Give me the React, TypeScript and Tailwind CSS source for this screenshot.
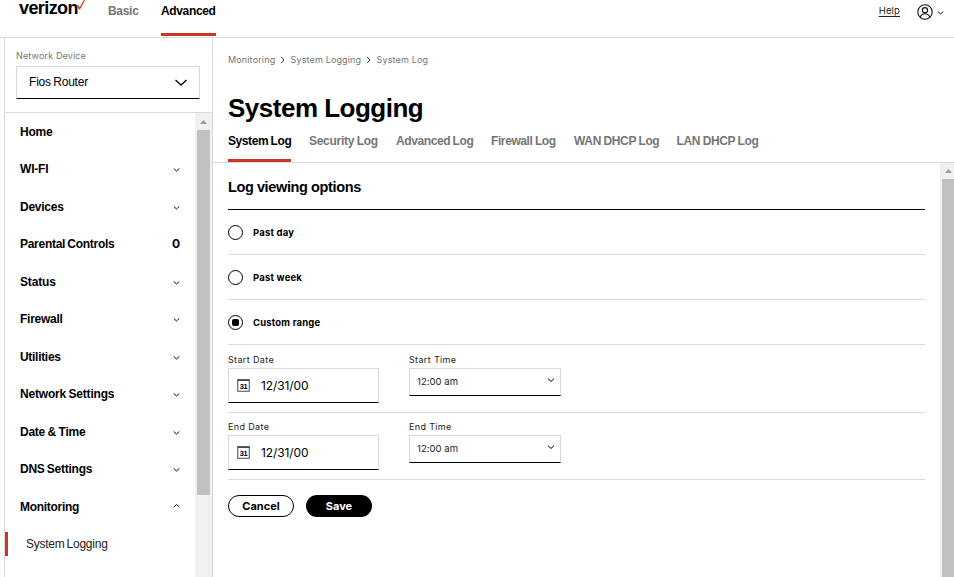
import React from "react";

type ChevronProps = { up?: boolean; className?: string; weight?: number };

function Chevron({ up = false, className = "", weight = 1 }: ChevronProps) {
  return (
    <svg viewBox="0 0 12 7" fill="none" stroke="currentColor" strokeWidth={weight} className={className}>
      <path d={up ? "M0.5 6 6 1l5.5 5" : "M0.5 1 6 6l5.5-5"} vectorEffect="non-scaling-stroke" />
    </svg>
  );
}

const navItems = [
  { label: "Home", icon: "none", track: "tracking-[-0.2px]" },
  { label: "WI-FI", icon: "down", track: "tracking-[-0.2px]" },
  { label: "Devices", icon: "down", track: "tracking-[-0.25px]" },
  { label: "Parental Controls", icon: "count", track: "tracking-[-0.28px] [word-spacing:-0.8px]" },
  { label: "Status", icon: "down", track: "tracking-[-0.15px]" },
  { label: "Firewall", icon: "down", track: "tracking-[-0.25px]" },
  { label: "Utilities", icon: "down", track: "tracking-[-0.3px]" },
  { label: "Network Settings", icon: "down", track: "tracking-[-0.18px] [word-spacing:-0.8px]" },
  { label: "Date & Time", icon: "down", track: "tracking-[-0.25px] [word-spacing:-0.5px]" },
  { label: "DNS Settings", icon: "down", track: "tracking-[-0.25px] [word-spacing:-0.8px]" },
  { label: "Monitoring", icon: "up", track: "tracking-[-0.3px]" },
];

const tabs = [
  { label: "System Log", box: "w-[63px] mr-[18px] tracking-[-0.42px]" },
  { label: "Security Log", box: "w-[69px] mr-[18px] tracking-[-0.28px]" },
  { label: "Advanced Log", box: "w-[77px] mr-[18px] tracking-[-0.4px]" },
  { label: "Firewall Log", box: "w-[65px] mr-[18px] tracking-[-0.4px]" },
  { label: "WAN DHCP Log", box: "w-[85px] mr-[17.5px] tracking-[-0.34px]" },
  { label: "LAN DHCP Log", box: "w-[82px] tracking-[-0.34px]" },
];

function Header() {
  return (
    <header className="flex h-[38px] shrink-0 border-b border-[#d8dada] pl-[19px] pr-[11px]">
      <div className="flex w-[89px] items-start">
        <span className="text-[18px] leading-4 font-bold tracking-[-0.6px]">verizon</span>
        <svg viewBox="0 0 8 11" className="-ml-px h-[11px] w-2 shrink-0" fill="#d52b1e">
          <path d="M0 5.2h1.5l1 2.3L6.8 0H8L3 9.4H2z" />
        </svg>
      </div>
      <span className="w-[53px] pt-1 text-[12px] leading-[14px] font-bold tracking-[-0.3px] text-[#747676]">Basic</span>
      <div className="h-9 w-[55px] border-b-[3px] border-[#cd3627] pt-1 text-[12px] leading-[14px] font-bold tracking-[-0.35px] whitespace-nowrap">
        Advanced
      </div>
      <div className="ml-auto flex h-6 items-center">
        <a className="mr-[17px] -mt-0.5 font-['Inter',sans-serif] text-[9.5px] tracking-[0.15px] text-[#222] underline underline-offset-2">Help</a>
        <svg viewBox="0 0 16 16" className="mr-1 size-4" fill="none" stroke="#111" strokeWidth="1.1">
          <circle cx="8" cy="8" r="7.2" />
          <circle cx="8" cy="6.2" r="2.6" />
          <path d="M3.2 13.2c.8-2.4 2.5-3.5 4.8-3.5s4 1.1 4.8 3.5" />
        </svg>
        <Chevron className="mt-0.5 -mr-px h-[3.5px] w-[7px] overflow-visible" />
      </div>
    </header>
  );
}

function Sidebar() {
  return (
    <aside className="ml-1 flex w-[209px] shrink-0 flex-col border-x border-[#d8dada]">
      <div className="h-[75px] shrink-0 border-b border-[#d8dada] px-[11px] pt-[11px]">
        <div className="font-['Inter',sans-serif] text-[9px] leading-[13px] tracking-[0.15px] text-[#747676]">Network Device</div>
        <div className="mt-[4px] flex h-[33px] w-[184px] items-center justify-between border border-[#d8dada] border-b-black pr-3 pl-3">
          <span className="-mt-0.5 text-[12px] tracking-[-0.2px] [word-spacing:-0.8px]">Fios Router</span>
          <Chevron className="h-[7px] w-3 overflow-visible" weight={1.3} />
        </div>
      </div>
      <div className="flex min-h-0 flex-1">
        <nav className="flex w-[190px] flex-col">
          {navItems.map((item) => (
            <div key={item.label} className="flex h-[37.5px] shrink-0 items-center justify-between pr-[15px] pl-[15px] text-[12px] font-bold">
              <span className={item.track}>{item.label}</span>
              {item.icon === "count" && <span className="font-['Inter',sans-serif] text-[12px] font-bold">0</span>}
              {item.icon === "down" && <Chevron className="mt-px h-[3.5px] w-[7px] overflow-visible" />}
              {item.icon === "up" && <Chevron up className="-mt-0.5 h-[3.5px] w-[7px] overflow-visible" />}
            </div>
          ))}
          <div className="flex h-[37.5px] shrink-0 items-center">
            <span className="h-6 w-[3px] bg-[#cd3627]" />
            <span className="pl-[18px] text-[12px] tracking-[-0.25px] [word-spacing:-1px] text-[#222]">System Logging</span>
          </div>
        </nav>
        <div className="flex w-[17px] flex-col items-center bg-[#f0f0f0]">
          <svg viewBox="0 0 7 4" className="mt-[7px] mb-[6px] h-1 w-[7px] shrink-0" fill="#999">
            <path d="M0 4 3.5 0 7 4z" />
          </svg>
          <div className="h-[365px] w-[13px] bg-[#c1c1c1]" />
        </div>
      </div>
    </aside>
  );
}

function Radio({ label, checked = false }: { label: string; checked?: boolean }) {
  return (
    <label className="flex h-[45px] items-center border-b border-[#d8dada]">
      <span className="flex size-[15px] items-center justify-center rounded-full border border-black">
        {checked && <span className="size-[7px] rounded-[2px] bg-black" />}
      </span>
      <span className="ml-2.5 pt-px font-['Inter',sans-serif] text-[9.5px] leading-4 font-bold tracking-[0.18px]">{label}</span>
    </label>
  );
}

function DateRow({ kind, box }: { kind: string; box: string }) {
  return (
    <div className={`flex gap-[30px] border-b border-[#d8dada] ${box}`}>
      <div className="w-[151px]">
        <div className="h-[15px] font-['Inter',sans-serif] text-[9px] leading-[14px] tracking-[0.35px] text-[#222]">{kind} Date</div>
        <div className="flex h-[35px] w-[151px] items-center border border-[#d8dada] border-b-black pl-[8px]">
          <svg viewBox="0 0 13 13" className="size-[13px]">
            <rect x="0.75" y="0.75" width="11.5" height="11.5" fill="none" stroke="#37505c" />
            <path d="M.5 1.2h12" stroke="#37505c" strokeWidth="1.6" />
            <text x="6.5" y="9.6" textAnchor="middle" fontSize="7.5" fontWeight="700" letterSpacing="-0.3">31</text>
          </svg>
          <span className="ml-[11px] font-['Inter',sans-serif] text-[12px] tracking-[-0.1px]">12/31/00</span>
        </div>
      </div>
      <div className="w-[152px]">
        <div className="h-[15px] font-['Inter',sans-serif] text-[9px] leading-[14px] tracking-[0.35px] text-[#222]">{kind} Time</div>
        <div className="flex h-7 items-center justify-between border border-[#d8dada] border-b-black pr-[5px] pl-[7px]">
          <span className="font-['Inter',sans-serif] text-[9.5px] tracking-[0.05px] text-[#222]">12:00 am</span>
          <Chevron className="-mt-1 h-1 w-2 overflow-visible" />
        </div>
      </div>
    </div>
  );
}

function Main() {
  return (
    <main className="flex min-w-0 flex-1 flex-col">
      <div className="h-[125px] shrink-0 border-b border-[#d8dada] pl-[15px]">
        <div className="flex h-[42px] items-center font-['Inter',sans-serif] text-[9px] tracking-[0.15px] whitespace-nowrap text-[#747676]">
          <span className="w-[50.5px] pt-px">Monitoring</span>
          <Chevron className="mt-px mr-[5px] h-[4px] w-[7px] -rotate-90 overflow-visible text-[#333]" />
          <span className="w-[74px] pt-px">System Logging</span>
          <Chevron className="mt-px mr-[5px] h-[4px] w-[7px] -rotate-90 overflow-visible text-[#333]" />
          <span className="pt-px">System Log</span>
        </div>
        <h1 className="mt-[13px] h-[38px] text-[26px] leading-[30px] font-bold tracking-[-0.5px]">System Logging</h1>
        <div className="flex text-[12px] leading-[14px] font-bold [word-spacing:-0.5px] whitespace-nowrap text-[#747676]">
          {tabs.map((tab, i) => (
            <div key={tab.label} className={`h-[31px] pt-[3px] ${tab.box} ${i === 0 ? "border-b-[3px] border-[#cd3627] text-black" : ""}`}>
              {tab.label}
            </div>
          ))}
        </div>
      </div>
      <div className="flex min-h-0 flex-1">
        <section className="w-[727px] pr-[15px] pl-[15px]">
          <h2 className="flex h-[47px] items-center border-b border-black pt-[3px] text-[14.5px] font-bold tracking-[-0.35px] [word-spacing:-0.3px]">Log viewing options</h2>
          <Radio label="Past day" />
          <Radio label="Past week" />
          <Radio label="Custom range" checked />
          <DateRow kind="Start" box="h-[68px] pt-2" />
          <DateRow kind="End" box="h-[67px] pt-[7px]" />
          <div className="mt-[15px] flex gap-3 font-['Inter',sans-serif] text-[11px] font-bold">
            <button className="h-[22px] w-[66px] rounded-full border border-black">Cancel</button>
            <button className="h-[22px] w-[66px] rounded-full bg-black text-white">Save</button>
          </div>
        </section>
        <div className="flex w-3.5 flex-col items-end bg-[#f0f0f0]">
          <svg viewBox="0 0 7 4" className="mt-1.5 mr-[2px] mb-[6px] h-1 w-[7px] shrink-0" fill="#999">
            <path d="M0 4 3.5 0 7 4z" />
          </svg>
          <div className="w-3 flex-1 bg-[#c1c1c1]" />
        </div>
      </div>
    </main>
  );
}

export default function App() {
  return (
    <div className="flex h-[577px] w-[954px] flex-col overflow-hidden bg-white font-['Liberation_Sans',Arial,sans-serif] text-black">
      <Header />
      <div className="flex min-h-0 flex-1">
        <Sidebar />
        <Main />
      </div>
    </div>
  );
}
